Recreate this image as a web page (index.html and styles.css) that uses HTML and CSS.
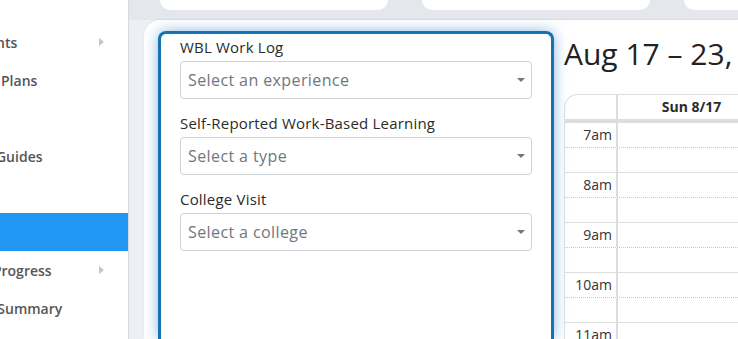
FILE: index.html
```html
<!DOCTYPE html>
<html lang="en">
<head>
    <meta charset="UTF-8">
    <meta name="viewport" content="width=device-width, initial-scale=1.0">
    <title>Calendar</title>
    <link rel="stylesheet" href="styles.css">
</head>
<body>
    <div class="sidebar">
        <ul class="nav-list">
            <li class="nav-item"><span>Assessments</span><i class="arrow"></i></li>
            <li class="nav-item"><span>Education Plans</span></li>
            <li class="nav-item"><span>Courses</span></li>
            <li class="nav-item"><span>Resource Guides</span></li>
            <li class="nav-item hover"><span>Schedules</span></li>
            <li class="nav-item active"><span>Calendar</span></li>
            <li class="nav-item"><span>Learning Progress</span><i class="arrow"></i></li>
            <li class="nav-item"><span>Semester Summary</span></li>
        </ul>
    </div>

    <div class="main">
        <div class="top-cards">
            <div class="top-card"></div>
            <div class="top-card"></div>
            <div class="top-card"></div>
        </div>

        <div class="panel">
            <div class="log-card">
                <div class="form-group">
                    <label>WBL Work Log</label>
                    <div class="select"><span>Select an experience</span><i class="caret"></i></div>
                </div>
                <div class="form-group">
                    <label>Self-Reported Work-Based Learning</label>
                    <div class="select"><span>Select a type</span><i class="caret"></i></div>
                </div>
                <div class="form-group">
                    <label>College Visit</label>
                    <div class="select"><span>Select a college</span><i class="caret"></i></div>
                </div>
            </div>

            <div class="calendar">
                <h2 class="cal-title">Aug 17 – 23, 2025</h2>
                <div class="cal-grid">
                    <div class="cal-head">
                        <div class="axis-cell"></div>
                        <div class="day-cell">Sun 8/17</div>
                        <div class="day-cell">Mon 8/18</div>
                    </div>
                    <div class="cal-body">
                        <div class="slot half"><div class="axis-cell">7am</div><div class="day-cell"></div><div class="day-cell"></div></div>
                        <div class="slot"><div class="axis-cell"></div><div class="day-cell"></div><div class="day-cell"></div></div>
                        <div class="slot half"><div class="axis-cell">8am</div><div class="day-cell"></div><div class="day-cell"></div></div>
                        <div class="slot"><div class="axis-cell"></div><div class="day-cell"></div><div class="day-cell"></div></div>
                        <div class="slot half"><div class="axis-cell">9am</div><div class="day-cell"></div><div class="day-cell"></div></div>
                        <div class="slot"><div class="axis-cell"></div><div class="day-cell"></div><div class="day-cell"></div></div>
                        <div class="slot half"><div class="axis-cell">10am</div><div class="day-cell"></div><div class="day-cell"></div></div>
                        <div class="slot"><div class="axis-cell"></div><div class="day-cell"></div><div class="day-cell"></div></div>
                        <div class="slot half"><div class="axis-cell">11am</div><div class="day-cell"></div><div class="day-cell"></div></div>
                    </div>
                </div>
            </div>
        </div>
    </div>
</body>
</html>
```

FILE: styles.css
```css
* {
    box-sizing: border-box;
}

body {
    font-family: 'Open Sans', 'Noto Sans', sans-serif;
    margin: 0;
    padding: 0;
    display: flex;
    height: 339px;
    overflow: hidden;
    background: #e9ecf1;
    color: #333;
}

/* sidebar, scrolled so that only the ends of the labels show */
.sidebar {
    width: 129px;
    flex-shrink: 0;
    background: #fff;
    border-right: 1px solid #d3d9e1;
    overflow: hidden;
    padding-top: 23px;
}

.nav-list {
    list-style: none;
    margin: 0 0 0 -70px;
    padding: 0;
}

.nav-item {
    height: 38px;
    display: flex;
    align-items: center;
    justify-content: space-between;
    padding-right: 24px;
    font-size: 14px;
    font-weight: 600;
    color: #555;
    white-space: nowrap;
}

.nav-item.hover {
    color: #2196f3;
}

.nav-item.active {
    background: #2196f3;
    color: #2196f3;
    margin-right: -1px;
}

.arrow {
    width: 0;
    height: 0;
    border-top: 4px solid transparent;
    border-bottom: 4px solid transparent;
    border-left: 5px solid #c2c6cc;
}

.main {
    flex: 1;
    min-width: 0;
    display: flex;
    flex-direction: column;
    background: #eceff4;
}

.top-cards {
    display: flex;
    gap: 34px;
    padding-left: 31px;
    background: #e4e7ec;
    height: 20px;
}

.top-card {
    width: 228px;
    height: 10px;
    flex-shrink: 0;
    background: #fff;
    border-radius: 0 0 10px 10px;
}

.panel {
    flex: 1;
    display: flex;
    gap: 10px;
    margin-left: 15px;
    padding: 11px 0 0 14px;
    background: #fff;
    border-radius: 16px 0 0 0;
    box-shadow: 0 -1px 2px rgba(0, 0, 0, 0.06);
    overflow: hidden;
}

.log-card {
    width: 396px;
    flex-shrink: 0;
    border: 3px solid #1772b2;
    border-bottom: none;
    border-radius: 8px 8px 0 0;
    padding: 2px 19px 0 19px;
    box-shadow: 0 0 14px rgba(50, 130, 200, 0.55);
    background: #fff;
}

.form-group {
    margin-bottom: 13px;
}

.form-group label {
    display: block;
    font-size: 15px;
    line-height: 22px;
    margin-bottom: 3px;
    color: #2b2b2b;
    letter-spacing: 0.2px;
}

.select {
    height: 38px;
    display: flex;
    align-items: center;
    justify-content: space-between;
    padding: 0 6px 0 7px;
    border: 1px solid #ced3d9;
    border-radius: 4px;
    font-size: 16px;
    letter-spacing: 0.4px;
    color: #6f7780;
}

.caret {
    width: 0;
    height: 0;
    border-left: 4px solid transparent;
    border-right: 4px solid transparent;
    border-top: 4px solid #777;
}

.calendar {
    flex-shrink: 0;
    width: 310px;
}

.cal-title {
    margin: 3px 0 0 0;
    font-size: 30px;
    line-height: 40px;
    font-weight: 400;
    color: #222;
    white-space: nowrap;
    height: 60px;
}

.cal-grid {
    border: 1px solid #ddd;
    border-top-left-radius: 14px;
    border-right: none;
}

.cal-head {
    display: flex;
    height: 28px;
    border-bottom: 4px solid #ddd;
}

.cal-head .day-cell {
    font-size: 14px;
    font-weight: 700;
    text-align: center;
    line-height: 24px;
    color: #2b2b2b;
}

.axis-cell {
    width: 53px;
    flex-shrink: 0;
    border-right: 2px solid #ddd;
    text-align: right;
    padding-right: 4px;
    font-size: 14px;
    line-height: 24px;
    color: #333;
}

.cal-head .axis-cell {
    border-top-left-radius: 14px;
}

.day-cell {
    width: 148px;
    flex-shrink: 0;
    border-right: 1px solid #ddd;
}

.slot {
    display: flex;
    height: 25px;
    border-bottom: 1px solid #ddd;
}

.slot.half {
    border-bottom: 1px dotted #c8c8c8;
}
```
